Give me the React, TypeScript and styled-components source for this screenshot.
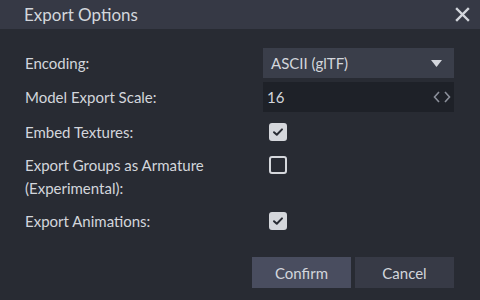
import React from 'react';
import styled, { createGlobalStyle } from 'styled-components';

const GlobalStyle = createGlobalStyle`
  html, body {
    margin: 0;
    padding: 0;
    background: #282b33;
  }
  * {
    box-sizing: border-box;
  }
`;

const Dialog = styled.div`
  width: 480px;
  height: 300px;
  background: #282b33;
  color: #d3d6dc;
  font-family: Lato, "Liberation Sans", sans-serif;
  font-size: 15px;
  display: flex;
  flex-direction: column;
`;

const TitleBar = styled.div`
  height: 29px;
  background: #363945;
  display: flex;
  align-items: center;
  justify-content: space-between;
  padding: 0 10px 0 24px;
`;

const Title = styled.div`
  font-size: 17px;
  color: #d3d6dc;
`;

const CloseButton = styled.div`
  width: 16px;
  height: 16px;
  display: flex;
  align-items: center;
  justify-content: center;
`;

const Form = styled.div`
  display: flex;
  flex-direction: column;
  padding: 19px 26px 0 25px;
`;

const FieldRow = styled.div<{ $gap?: number }>`
  display: grid;
  grid-template-columns: 238px 1fr;
  align-items: center;
  height: 30px;
  margin-bottom: ${(p) => p.$gap ?? 4}px;
`;

const CheckRow = styled.div`
  display: grid;
  grid-template-columns: 238px 1fr;
  align-items: start;
  padding: 5px 0;
  line-height: 23px;
`;

const Label = styled.div`
  line-height: 23px;
`;

const Select = styled.div`
  height: 30px;
  background: #3a3e4a;
  display: flex;
  align-items: center;
  justify-content: space-between;
  padding: 0 12px 0 8px;
`;

const NumberInput = styled.div`
  height: 30px;
  background: #1e2128;
  display: flex;
  align-items: center;
  justify-content: space-between;
  padding: 0 3px 0 4px;
`;

const Checkbox = styled.div<{ $checked?: boolean }>`
  width: 18px;
  height: 18px;
  margin: 2px 0 0 6px;
  border-radius: 3px;
  border: 2px solid #d5d7dc;
  background: ${(p) => (p.$checked ? '#d5d7dc' : 'transparent')};
  display: flex;
  align-items: center;
  justify-content: center;
`;

const Buttons = styled.div`
  display: flex;
  justify-content: flex-end;
  gap: 4px;
  padding: 19px 26px 0 0;
`;

const Button = styled.div<{ $primary?: boolean }>`
  width: 99px;
  height: 31px;
  background: ${(p) => (p.$primary ? '#494d5f' : '#373a46')};
  color: #d3d6dc;
  display: flex;
  align-items: center;
  justify-content: center;
`;

const Check = () => (
  <svg width="12" height="10" viewBox="0 0 12 10">
    <path d="M2 5.2 L4.8 7.8 L10 2.4" fill="none" stroke="#282b33" strokeWidth="2" strokeLinecap="round" strokeLinejoin="round" />
  </svg>
);

const CheckField = ({ label, checked }: { label: React.ReactNode; checked?: boolean }) => (
  <CheckRow>
    <Label>{label}</Label>
    <Checkbox $checked={checked}>{checked && <Check />}</Checkbox>
  </CheckRow>
);

const App: React.FC = () => {
  return (
    <Dialog>
      <GlobalStyle />
      <TitleBar>
        <Title>Export Options</Title>
        <CloseButton>
          <svg width="15" height="15" viewBox="0 0 15 15">
            <path d="M2 2 L13 13 M13 2 L2 13" stroke="#d3d6dc" strokeWidth="2.4" strokeLinecap="square" />
          </svg>
        </CloseButton>
      </TitleBar>
      <Form>
        <FieldRow>
          <Label>Encoding:</Label>
          <Select>
            <span>ASCII (glTF)</span>
            <svg width="11" height="7" viewBox="0 0 11 7">
              <path d="M0 0 H11 L5.5 7 Z" fill="#d3d6dc" />
            </svg>
          </Select>
        </FieldRow>
        <FieldRow>
          <Label>Model Export Scale:</Label>
          <NumberInput>
            <span>16</span>
            <svg width="18" height="12" viewBox="0 0 18 12">
              <path d="M6 1 L1.5 6 L6 11 M12 1 L16.5 6 L12 11" fill="none" stroke="#8b8f9a" strokeWidth="1.6" />
            </svg>
          </NumberInput>
        </FieldRow>
        <CheckField label="Embed Textures:" checked />
        <CheckField
          label={
            <>
              Export Groups as Armature
              <br />
              (Experimental):
            </>
          }
        />
        <CheckField label="Export Animations:" checked />
      </Form>
      <Buttons>
        <Button $primary>Confirm</Button>
        <Button>Cancel</Button>
      </Buttons>
    </Dialog>
  );
};

export default App;
